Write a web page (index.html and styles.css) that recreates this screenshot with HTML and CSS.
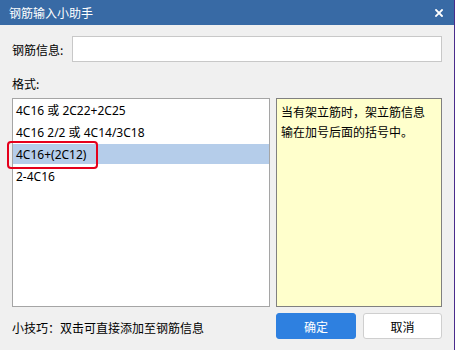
FILE: index.html
```html
<!DOCTYPE html>
<html lang="zh-CN">
<head>
    <meta charset="utf-8">
    <title>钢筋输入小助手</title>
    <link rel="stylesheet" href="styles.css">
</head>
<body>
    <div class="window">
        <div class="titlebar">
            <span class="title">钢筋输入小助手</span>
            <svg class="close" width="8" height="8" viewBox="0 0 8 8">
                <path d="M1 1 L7 7 M7 1 L1 7" stroke="#ffffff" stroke-width="1.8" stroke-linecap="square"/>
            </svg>
        </div>

        <div class="content">
            <div class="info-row">
                <label class="info-label">钢筋信息:</label>
                <input class="info-input" type="text">
            </div>

            <div class="format-label">格式:</div>

            <div class="panels">
                <ul class="format-list">
                    <li>4C16 或 2C22+2C25</li>
                    <li>4C16 2/2 或 4C14/3C18</li>
                    <li class="selected"><span class="marked">4C16+(2C12)</span></li>
                    <li>2-4C16</li>
                </ul>
                <div class="hint-box">当有架立筋时，架立筋信息输在加号后面的括号中。</div>
            </div>

            <div class="footer">
                <span class="tip">小技巧：双击可直接添加至钢筋信息</span>
                <button class="btn btn-primary">确定</button>
                <button class="btn">取消</button>
            </div>
        </div>
    </div>
</body>
</html>
```

FILE: styles.css
```css
body {
    margin: 0;
    width: 455px;
    height: 350px;
    overflow: hidden;
    font-family: "Noto Sans CJK SC", "Noto Sans", sans-serif;
    font-size: 12px;
    color: #000000;
    background-color: #4a2c8c;
}
.window {
    width: 454px;
    height: 350px;
    background-color: #f0f0f0;
    display: flex;
    flex-direction: column;
}
.titlebar {
    height: 25px;
    background-color: #386aa5;
    display: flex;
    align-items: center;
    padding: 0 11px 0 9px;
    color: #ffffff;
}
.title {
    flex: 1;
    line-height: 16px;
}
.close {
    display: block;
}
.content {
    padding: 0 12px;
    display: flex;
    flex-direction: column;
}
.info-row {
    margin-top: 11px;
    display: flex;
    align-items: center;
    height: 26px;
}
.info-label {
    width: 60px;
}
.info-input {
    width: 370px;
    height: 26px;
    box-sizing: border-box;
    margin: 0;
    border: 1px solid #c8c8c8;
    background-color: #ffffff;
    outline: none;
}
.format-label {
    margin-top: 14px;
    line-height: 16px;
}
.panels {
    margin-top: 6px;
    display: flex;
    gap: 6px;
    height: 209px;
}
.format-list {
    list-style: none;
    margin: 0;
    padding: 1px 0 0 0;
    width: 258px;
    box-sizing: border-box;
    border: 1px solid #a5a5a5;
    background-color: #ffffff;
    font-family: "Noto Sans", "Noto Sans CJK SC", sans-serif;
}
.format-list li {
    height: 22px;
    box-sizing: border-box;
    padding: 1px 0 0 3px;
    line-height: 20px;
    position: relative;
}
.format-list li.selected {
    background: linear-gradient(#b5cdea 0, #b5cdea 20px, transparent 20px);
}
.marked::after {
    content: "";
    position: absolute;
    left: -6px;
    top: -3px;
    width: 87px;
    height: 24px;
    border: 2px solid #e5001c;
    border-radius: 4px;
}
.hint-box {
    width: 166px;
    box-sizing: border-box;
    border: 1px solid #808080;
    background-color: #ffffcc;
    padding: 3px 10px 3px 4px;
    line-height: 20px;
}
.footer {
    margin-top: 6px;
    display: flex;
    align-items: center;
    height: 26px;
}
.tip {
    flex: 1;
    padding-top: 2px;
}
.btn {
    width: 79px;
    height: 26px;
    margin: 0 0 0 7px;
    padding: 0;
    box-sizing: border-box;
    border: 1px solid #cfcfcf;
    border-radius: 3px;
    background-color: #ffffff;
    font-family: inherit;
    font-size: 12px;
    color: #000000;
}
.btn-primary {
    width: 80px;
    margin-left: 0;
    border-color: #2e80e0;
    background-color: #2e80e0;
    color: #ffffff;
}
```
